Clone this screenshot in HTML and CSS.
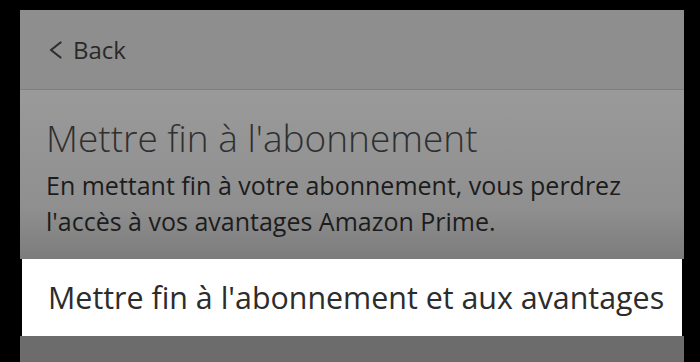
FILE: index.html
```html
<!DOCTYPE html>
<html lang="fr">
<head>
    <meta charset="UTF-8">
    <meta name="viewport" content="width=device-width, initial-scale=1.0">
    <title>Mettre fin à l'abonnement</title>
    <link rel="stylesheet" href="styles.css">
</head>
<body>
    <div class="screen">
        <div class="header">
            <a class="back" href="#">
                <svg width="15" height="18" viewBox="0 0 15 18">
                    <path d="M12.5 1.5 L3 9 L12.5 16.5" fill="none" stroke="#2e2e2e" stroke-width="2.2" stroke-linecap="round" stroke-linejoin="round"/>
                </svg>
                <span>Back</span>
            </a>
        </div>

        <div class="content">
            <h1>Mettre fin à l'abonnement</h1>
            <p>En mettant fin à votre abonnement, vous perdrez<br>l'accès à vos avantages Amazon Prime.</p>
        </div>

        <div class="action">Mettre fin à l'abonnement et aux avantages</div>

        <div class="rest"></div>
    </div>
</body>
</html>
```

FILE: styles.css
```css
html, body {
    margin: 0;
    padding: 0;
    background: #000;
}
body {
    width: 700px;
    height: 362px;
    overflow: hidden;
    font-family: "Open Sans", "Noto Sans", Arial, sans-serif;
    padding: 10px 16px 0 20px;
    box-sizing: border-box;
}
.screen {
    width: 664px;
    height: 352px;
    display: flex;
    flex-direction: column;
}
.header {
    height: 79px;
    background: #8e8e8e;
    border-bottom: 1px solid #7f7f7f;
    display: flex;
    align-items: center;
    padding-left: 28px;
}
.back {
    display: flex;
    align-items: center;
    gap: 10px;
    color: #2a2a2a;
    text-decoration: none;
    font-size: 24px;
}
.content {
    height: 169px;
    box-sizing: border-box;
    padding: 25px 26px 0 26px;
    background: linear-gradient(#9a9a9a, #8f8f8f 70%, #7c7c7c);
}
h1 {
    margin: 0;
    font-size: 37px;
    font-weight: 300;
    color: #2f2f2f;
    line-height: 46px;
}
.content p {
    margin: 6px 0 0 0;
    font-size: 25px;
    font-weight: 500;
    line-height: 36px;
    color: #1c1c1c;
    white-space: nowrap;
}
.action {
    height: 77px;
    background: #fff;
    display: flex;
    align-items: center;
    padding-left: 26px;
    font-size: 30.4px;
    color: #2c2c2c;
    margin: 0 2px;
}
.rest {
    flex: 1;
    background: #6c6c6c;
}
```
